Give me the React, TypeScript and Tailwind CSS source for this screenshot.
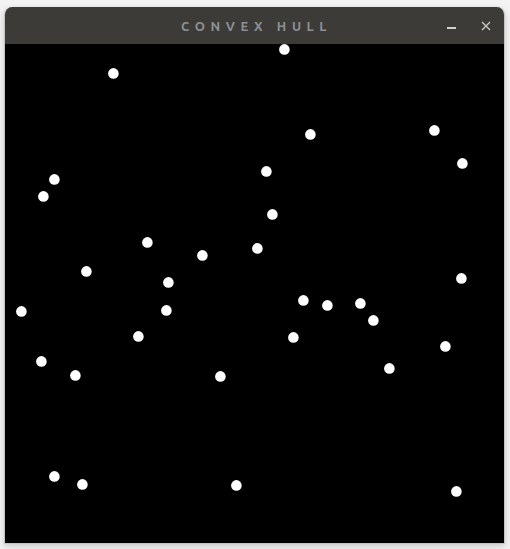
import React from "react";

const dots: [number, number][] = [
  [284, 49], [113, 73], [310, 134], [434, 130], [462, 163], [266, 171],
  [54, 179], [43, 196], [272, 214], [147, 242], [202, 255], [257, 248],
  [86, 271], [168, 282], [461, 278], [21, 311], [166, 310], [303, 300],
  [327, 305], [360, 303], [373, 320], [138, 336], [293, 337], [445, 346],
  [41, 361], [75, 375], [220, 376], [389, 368], [54, 476], [82, 484],
  [236, 485], [456, 491],
];

export default function App() {
  const ox = 4.6;
  const oy = 43.6;
  return (
    <div className="w-[510px] h-[549px] bg-[#f3f3f3] pt-[7px] pl-[4px] overflow-hidden">
      <div className="w-[501px] h-[537px] flex flex-col rounded-t-[8px] overflow-hidden border border-[#c4c4c4] border-t-0 shadow-[0_2px_6px_rgba(0,0,0,0.18)]">
        <div className="h-[37px] bg-[#3c3b38] flex items-center relative shrink-0">
          <div
            className="absolute left-[176px] top-[13px] text-[13px] leading-none font-bold text-[#8c9096] tracking-[5.6px]"
            style={{ fontFamily: "Ubuntu, 'Open Sans', 'DejaVu Sans', sans-serif" }}
          >
            CONVEX HULL
          </div>
          <div className="absolute left-[442px] top-[20px] w-[9px] h-[1.5px] bg-[#d0d0d0]" />
          <svg className="absolute left-[476px] top-[14px]" width="10" height="10" viewBox="0 0 10 10">
            <path d="M1 1 L9 9 M9 1 L1 9" stroke="#c8c8c8" strokeWidth="1.4" />
          </svg>
        </div>
        <div className="flex-1 bg-black relative">
          <svg className="absolute inset-0" width="499" height="499">
            {dots.map(([x, y], i) => (
              <circle key={i} cx={x - ox} cy={y - oy} r={5.3} fill="#fff" />
            ))}
          </svg>
        </div>
      </div>
    </div>
  );
}
